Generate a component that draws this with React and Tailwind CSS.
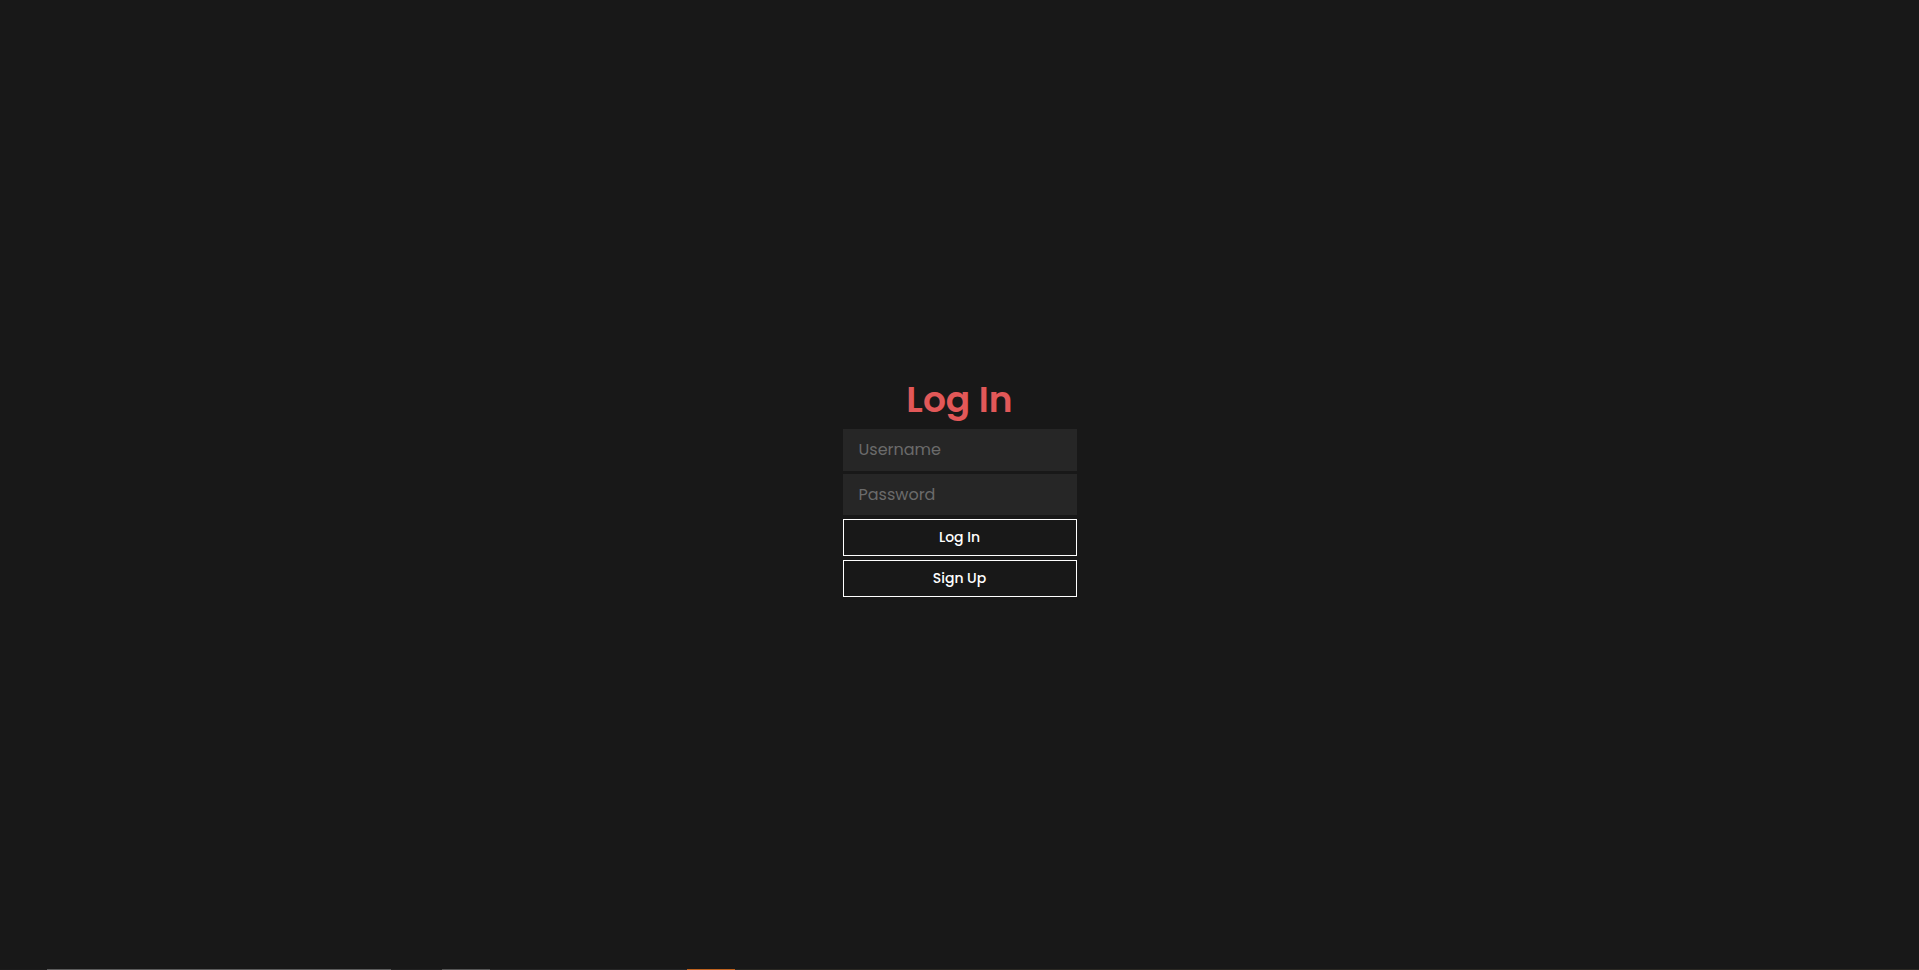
import { useState } from 'react';

// Login screen: title, two inputs, two outlined buttons, centred on a dark page
const App = () => {
  const [username, setUsername] = useState('');
  const [password, setPassword] = useState('');

  return (
    <div
      className="h-screen w-full flex flex-col bg-[#181818]"
      style={{ fontFamily: 'Poppins, Inter, "Open Sans", sans-serif' }}
    >
      <main className="flex-1 flex items-center justify-center">
        <form
          className="w-[234px] pt-[3px] flex flex-col"
          onSubmit={(e) => e.preventDefault()}
        >
          <h1 className="text-center text-[36px] leading-[48px] font-semibold text-[#e25858] mb-[5px]">
            Log In
          </h1>

          <input
            type="text"
            value={username}
            onChange={(e) => setUsername(e.target.value)}
            placeholder="Username"
            className="h-[42px] w-full bg-[#262626] px-4 text-base text-white placeholder:text-[#6b6b6b] outline-none"
          />
          <input
            type="password"
            value={password}
            onChange={(e) => setPassword(e.target.value)}
            placeholder="Password"
            className="h-[41px] w-full mt-[3px] bg-[#262626] px-4 text-base text-white placeholder:text-[#6b6b6b] outline-none"
          />

          <button
            type="submit"
            className="h-[37px] w-full mt-[4px] border border-white bg-[#181818] text-white text-sm font-medium"
          >
            Log In
          </button>
          <button
            type="button"
            className="h-[37px] w-full mt-[4px] border border-white bg-[#181818] text-white text-sm font-medium"
          >
            Sign Up
          </button>
        </form>
      </main>

      {/* thin strip along the bottom edge */}
      <div className="h-px flex w-full">
        <div className="w-[47px] bg-[#1c1c1c]" />
        <div className="w-[344px] bg-[#5c5c5c]" />
        <div className="w-[51px] bg-[#222222]" />
        <div className="w-[48px] bg-[#555555]" />
        <div className="w-[197px] bg-[#262626]" />
        <div className="w-[48px] bg-[#c0631f]" />
        <div className="flex-1 bg-[#2a2823]" />
      </div>
    </div>
  );
};

export default App;
